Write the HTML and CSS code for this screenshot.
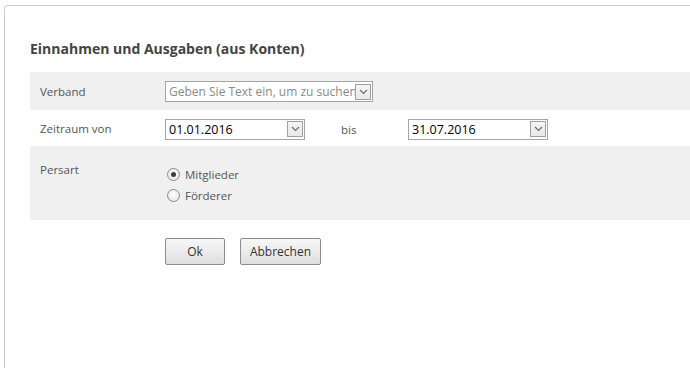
FILE: index.html
```html
<!DOCTYPE html>
<html lang="de">
<head>
<meta charset="utf-8">
<title>Einnahmen und Ausgaben</title>
<link rel="stylesheet" href="styles.css">
</head>
<body>
<div class="panel">
  <h1 class="title">Einnahmen und Ausgaben (aus Konten)</h1>
  <div class="form">
    <div class="row row-verband">
      <div class="label">Verband</div>
      <div class="field">
        <div class="combo combo-search">
          <span class="text placeholder">Geben Sie Text ein, um zu suchen</span>
          <span class="drop"><svg width="9" height="6" viewBox="0 0 9 6"><path d="M1 1 L4.5 4.5 L8 1" fill="none" stroke="#6d6d6d" stroke-width="1.2"/></svg></span>
        </div>
      </div>
    </div>
    <div class="row row-zeit">
      <div class="label">Zeitraum von</div>
      <div class="field">
        <div class="combo combo-date">
          <span class="text">01.01.2016</span>
          <span class="drop"><svg width="9" height="6" viewBox="0 0 9 6"><path d="M1 1 L4.5 4.5 L8 1" fill="none" stroke="#6d6d6d" stroke-width="1.2"/></svg></span>
        </div>
        <div class="bis">bis</div>
        <div class="combo combo-date">
          <span class="text">31.07.2016</span>
          <span class="drop"><svg width="9" height="6" viewBox="0 0 9 6"><path d="M1 1 L4.5 4.5 L8 1" fill="none" stroke="#6d6d6d" stroke-width="1.2"/></svg></span>
        </div>
      </div>
    </div>
    <div class="row row-persart">
      <div class="label">Persart</div>
      <div class="field radios">
        <label class="radio-line"><span class="radio checked"></span>Mitglieder</label>
        <label class="radio-line"><span class="radio"></span>Förderer</label>
      </div>
    </div>
  </div>
  <div class="actions">
    <button class="btn btn-ok">Ok</button>
    <button class="btn btn-cancel">Abbrechen</button>
  </div>
</div>
</body>
</html>
```
FILE: styles.css
```css
html, body {
  margin: 0;
  padding: 0;
  background: #fff;
  overflow: hidden;
  height: 368px;
}
body {
  font-family: "Open Sans", "DejaVu Sans", sans-serif;
  font-size: 11.5px;
  color: #555;
}
.panel {
  box-sizing: border-box;
  margin: 5px -20px 0 4px;
  border: 1px solid #cccccc;
  border-bottom: none;
  border-radius: 4px 4px 0 0;
  height: 363px;
  padding: 0 0 0 25px;
}
.title {
  margin: 0;
  padding-top: 34px;
  height: 32px;
  font-size: 14px;
  font-weight: bold;
  color: #444;
  line-height: 18px;
}
.form {
  display: flex;
  flex-direction: column;
}
.row {
  display: flex;
  align-items: center;
}
.row-verband {
  background: #f0f0f0;
  height: 38px;
}
.row-zeit {
  height: 36px;
}
.row-persart {
  background: #f0f0f0;
  height: 74px;
  align-items: flex-start;
}
.label {
  width: 125px;
  padding-left: 10px;
  flex: none;
}
.row-persart .label { padding-top: 16px; }
.field {
  display: flex;
  align-items: center;
}
.combo {
  box-sizing: border-box;
  display: flex;
  align-items: center;
  height: 21px;
  border: 1px solid #a5a5a5;
  background: #fff;
  padding: 0 1px 0 3px;
}
.combo .text {
  flex: 1;
  overflow: hidden;
  white-space: nowrap;
  color: #000;
  font-size: 12.5px;
}
.combo .placeholder {
  color: #8a8a8a;
  font-size: 12px;
}
.combo-search {
  width: 208px;
  margin-top: 1px;
}
.combo-date {
  width: 140px;
  margin-top: 2px;
}
.drop {
  box-sizing: border-box;
  flex: none;
  width: 16px;
  height: 16px;
  border: 1px solid #a0a0a0;
  background: linear-gradient(#f4f4f4, #e8e8e8);
  display: flex;
  align-items: center;
  justify-content: center;
}
.bis {
  width: 67px;
  padding-left: 36px;
  margin-top: 2px;
}
.radios {
  flex-direction: column;
  align-items: flex-start;
  padding-top: 18px;
}
.radio-line {
  display: flex;
  align-items: center;
  height: 22px;
  margin-top: -1px;
}
.radio {
  box-sizing: border-box;
  width: 13px;
  height: 13px;
  border-radius: 50%;
  border: 1px solid #8a8a8a;
  background: radial-gradient(circle at 50% 40%, #ffffff 0%, #e6e6e6 85%);
  margin: 0 5px 0 2px;
  position: relative;
}
.radio.checked::after {
  content: "";
  position: absolute;
  left: 3px;
  top: 3px;
  width: 5px;
  height: 5px;
  border-radius: 50%;
  background: #3a3a3a;
}
.actions {
  display: flex;
  gap: 15px;
  padding: 18px 0 0 135px;
}
.btn {
  box-sizing: border-box;
  height: 27px;
  border: 1px solid #8c8c8c;
  border-radius: 2px;
  background: linear-gradient(#f6f6f6 0%, #ececec 50%, #dedede 100%);
  font-family: "Open Sans", "DejaVu Sans", sans-serif;
  font-size: 12px;
  color: #333;
  padding: 0;
}
.btn-ok { width: 60px; }
.btn-cancel { width: 81px; }
```
